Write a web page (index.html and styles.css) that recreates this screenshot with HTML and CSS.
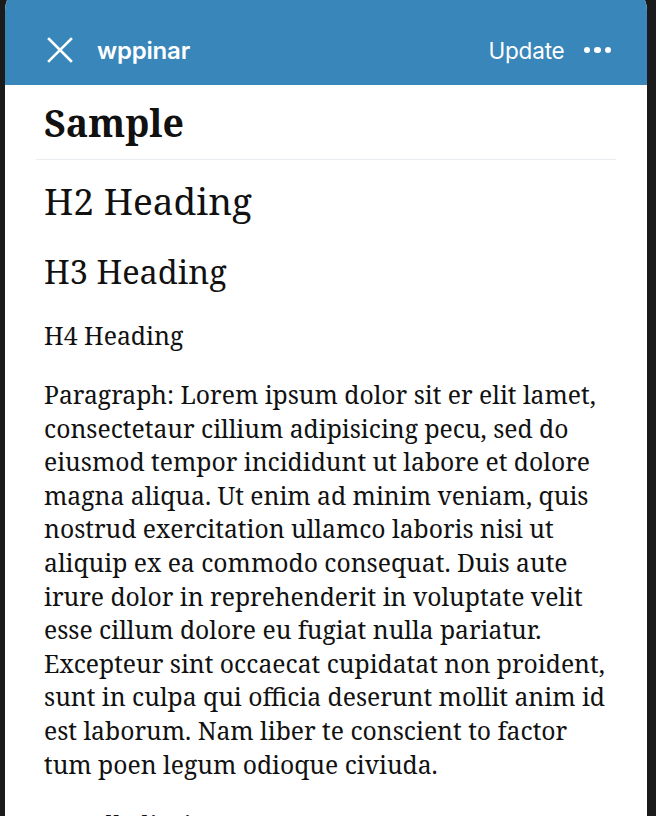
FILE: index.html
```html
<!DOCTYPE html>
<html lang="en">
<head>
<meta charset="utf-8">
<title>Sample</title>
<link rel="stylesheet" href="styles.css">
</head>
<body>
<div class="card">
  <header class="topbar">
    <div class="topbar-left">
      <svg class="close-icon" width="26" height="26" viewBox="0 0 26 26" aria-hidden="true">
        <path d="M2 2 L24 24 M24 2 L2 24" stroke="#fff" stroke-width="2.6" stroke-linecap="square" fill="none"/>
      </svg>
      <span class="site-name">wppinar</span>
    </div>
    <div class="topbar-right">
      <span class="update">Update</span>
      <span class="more" aria-label="More">
        <span class="dot"></span><span class="dot"></span><span class="dot"></span>
      </span>
    </div>
  </header>
  <main class="content">
    <h1 class="post-title">Sample</h1>
    <hr class="divider">
    <h2 class="h2">H2 Heading</h2>
    <h3 class="h3">H3 Heading</h3>
    <h4 class="h4">H4 Heading</h4>
    <p class="para">Paragraph: Lorem ipsum dolor sit er elit lamet,<br>consectetaur cillium adipisicing pecu, sed do<br>eiusmod tempor incididunt ut labore et dolore<br>magna aliqua. Ut enim ad minim veniam, quis<br>nostrud exercitation ullamco laboris nisi ut<br>aliquip ex ea commodo consequat. Duis aute<br>irure dolor in reprehenderit in voluptate velit<br>esse cillum dolore eu fugiat nulla pariatur.<br>Excepteur sint occaecat cupidatat non proident,<br>sunt in culpa qui officia deserunt mollit anim id<br>est laborum. Nam liber te conscient to factor<br>tum poen legum odioque civiuda.</p>
    <ul class="list">
      <li>Hello list item</li>
    </ul>
  </main>
</div>
</body>
</html>
```

FILE: styles.css
```css
html, body {
  margin: 0;
  padding: 0;
  background: #1b1b1b;
  height: 100%;
  overflow: hidden;
}
body {
  font-family: "Noto Serif", "DejaVu Serif", serif;
}
.card {
  margin: -14px 9px 0 5px;
  background: #ffffff;
  border-radius: 24px 24px 0 0;
  overflow: hidden;
  min-height: 900px;
}
.topbar {
  background: #3986bb;
  color: #fff;
  padding: 42px 36px 13px 42px;
  height: 44px;
  display: flex;
  align-items: center;
  justify-content: space-between;
  font-family: Inter, "Noto Sans", sans-serif;
}
.topbar-left, .topbar-right {
  display: flex;
  align-items: center;
}
.close-icon {
  display: block;
}
.site-name {
  margin-left: 24px;
  font-size: 24px;
  font-weight: 600;
  letter-spacing: -0.2px;
}
.update {
  font-size: 22.5px;
  font-weight: 400;
  letter-spacing: -0.2px;
}
.more {
  display: flex;
  gap: 4px;
  margin-left: 19px;
}
.dot {
  width: 6.5px;
  height: 6.5px;
  border-radius: 50%;
  background: #fff;
}
.content {
  padding: 0 31px;
  color: #111;
}
.post-title {
  margin: 14px 0 0;
  padding: 0 8px 12px;
  font-size: 37.5px;
  line-height: 48px;
  font-weight: 700;
}
.divider {
  margin: 0;
  border: 0;
  height: 1px;
  background: #e8eef2;
}
.h2, .h3, .h4 {
  font-weight: 400;
  padding: 0 8px;
}
.h2 {
  margin: 18px 0 0;
  font-size: 37px;
  line-height: 46px;
}
.h3 {
  margin: 27px 0 0;
  font-size: 32.5px;
  line-height: 42px;
}
.h4 {
  margin: 26px 0 0;
  font-size: 24.8px;
  line-height: 32px;
}
.para {
  margin: 27px 0 0;
  padding: 0 8px;
  font-size: 24.7px;
  line-height: 33.6px;
  white-space: nowrap;
}
.list {
  margin: 27px 0 0;
  padding: 0 8px 0 37px;
  font-size: 24.7px;
  line-height: 33.6px;
}
```
